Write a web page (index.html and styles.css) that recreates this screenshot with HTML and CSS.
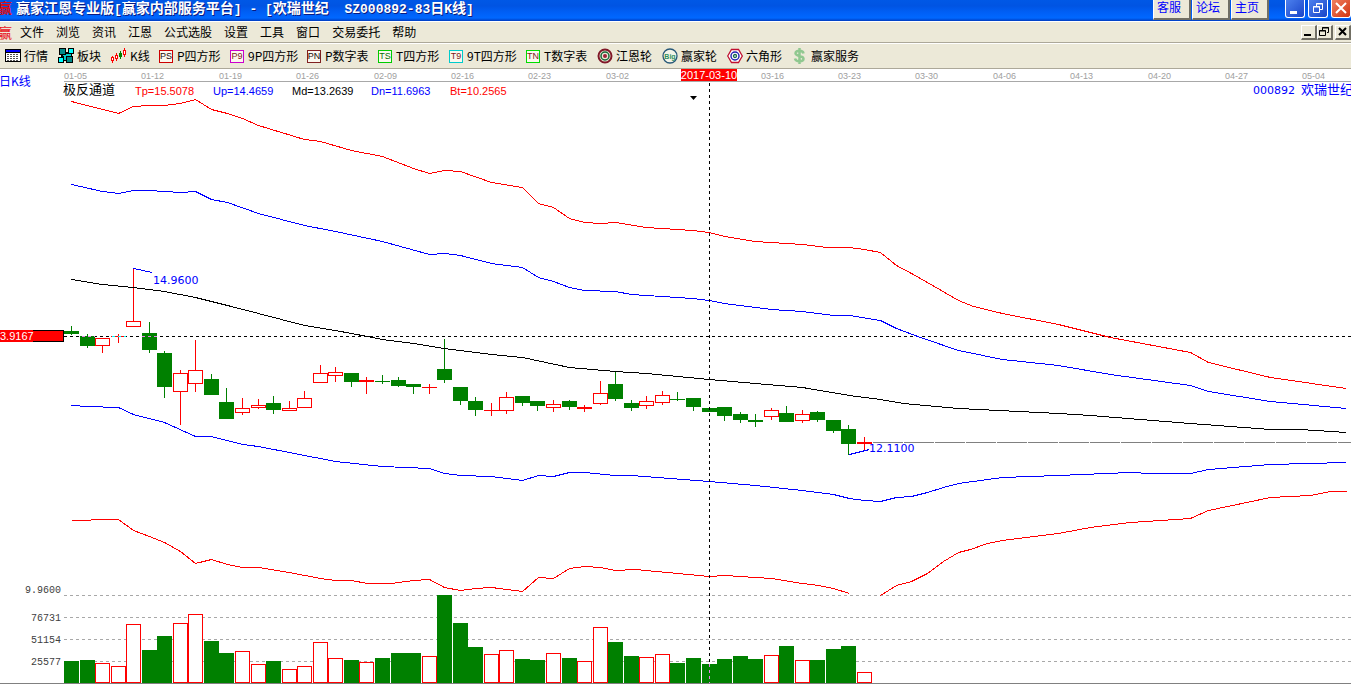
FILE: index.html
```html
<!DOCTYPE html>
<html lang="zh-CN">
<head>
<meta charset="utf-8">
<title>赢家江恩专业版</title>
<link rel="stylesheet" href="styles.css">
</head>
<body>
<div class="app">
<header class="titlebar">
  <span class="logo logo-dark">赢</span>
  <h1 class="title">赢家江恩专业版<span class="half">[</span>赢家内部服务平台<span class="half">] - [</span>欢瑞世纪<span class="half">&nbsp; SZ000892-83</span>日<span class="half">K</span>线<span class="half">]</span></h1>
  <div class="links">
    <button class="link-btn">客服</button>
    <button class="link-btn">论坛</button>
    <button class="link-btn">主页</button>
  </div>
  <div class="winctl">
    <button class="win" aria-label="最小化"><svg width="20" height="18"><path d="M5 11h7v3H5z" fill="#fff"/></svg></button>
    <button class="win" aria-label="还原"><svg width="20" height="18" fill="none" stroke="#fff"><path d="M8.500 6V3.500h6v6H12M8 4h7"/><path d="M5.500 6.500h6v6h-6zM5 7h7"/></svg></button>
    <button class="win close" aria-label="关闭"><svg width="20" height="18"><path d="M5 3l10 10M15 3L5 13" stroke="#fff" stroke-width="2"/></svg></button>
  </div>
</header>
<nav class="menubar">
  <span class="logo">赢</span>
  <button class="menu">文件</button><button class="menu">浏览</button><button class="menu">资讯</button><button class="menu">江恩</button><button class="menu">公式选股</button><button class="menu">设置</button><button class="menu">工具</button><button class="menu">窗口</button><button class="menu">交易委托</button><button class="menu">帮助</button>
  <div class="mdi">
    <button class="small" aria-label="最小化窗口"><svg width="13" height="12"><path d="M2 8h7v2H2z"/></svg></button>
    <button class="small" aria-label="还原窗口"><svg width="13" height="12" fill="none" stroke="#000"><path d="M4.500 4V1.500h6v5H9M4 2h7M1.500 4.500h6v5h-6zM1 5h7"/></svg></button>
    <button class="small last" aria-label="关闭窗口"><svg width="13" height="12"><path d="M3 2l7 7M10 2L3 9" stroke="#000" stroke-width="2"/></svg></button>
  </div>
</nav>
<div class="toolbar">
  <button class="tool w53"><svg class="ico" width="17" height="16" shape-rendering="crispEdges"><path d="M0 1h16v13H0z"/><path d="M1 2h14v2H1z" fill="#00f"/><path d="M1 5h14v8H1z" fill="#fff"/><path d="M2 6.500h12M2 8.500h12M2 10.500h12M2 12.500h12" stroke="#555" stroke-dasharray="2 1"/></svg>行情</button>
  <button class="tool w53"><svg class="ico" width="17" height="16" stroke="#000" shape-rendering="crispEdges"><path d="M4.500 4.500h9v8h-9z" fill="#0cc"/><path d="M1.500.500h6v6h-6zM8.500 8.500h6v6h-6z" fill="#088"/><path d="M10.500.500h5v5h-5zM.500 9.500h5v5h-5z" fill="#0ff"/><path d="M5.500 8v7M8 5.500h3M3 7v3M13 6v3" fill="none"/></svg>板块</button>
  <button class="tool w48"><svg class="ico" width="17" height="16" shape-rendering="crispEdges"><path d="M1.500 8v7M5.500 5v8M13.500 0v9" stroke="red"/><path d="M9.500 3v8" stroke="green"/><path d="M.500 9.500h2v3h-2zM4.500 7.500h2v3h-2zM12.500 2.500h2v4h-2z" fill="#fff" stroke="red"/><path d="M8 5h3v4H8z" fill="green"/></svg>K线</button>
  <button class="tool w71"><span class="tag ps">PS</span>P四方形</button>
  <button class="tool w77"><span class="tag p9">P9</span>9P四方形</button>
  <button class="tool w71"><span class="tag pn">PN</span>P数字表</button>
  <button class="tool w71"><span class="tag ts">TS</span>T四方形</button>
  <button class="tool w77"><span class="tag t9">T9</span>9T四方形</button>
  <button class="tool w71"><span class="tag tn">TN</span>T数字表</button>
  <button class="tool w65"><svg class="ico" width="17" height="16" fill="none"><circle cx="8" cy="8" r="6.500" stroke="#801828" stroke-width="2"/><circle cx="8" cy="8" r="4" stroke="#186838" stroke-width="1.500"/><circle cx="8" cy="8" r="2" fill="#a02038"/></svg>江恩轮</button>
  <button class="tool w65"><svg class="ico" width="17" height="16"><circle cx="8" cy="8" r="7" fill="#f4f4e8" stroke="#285878" stroke-width="1.300"/><text x="8" y="11" text-anchor="middle" class="big-ico">Big</text></svg>赢家轮</button>
  <button class="tool w65"><svg class="ico" width="17" height="16" fill="none"><path d="M4.500 1.500h7L15.300 8l-3.800 6.500h-7L.700 8z" fill="#fff" stroke="#c01030" stroke-width="1.300"/><circle cx="8" cy="8" r="4" stroke="#2020b0" stroke-width="1.400"/><circle cx="8" cy="8" r="1.500" stroke="#186848" stroke-width="1.300"/></svg>六角形</button>
  <button class="tool w71"><svg class="ico" width="17" height="16" fill="none" stroke="#90c890" stroke-width="2.500"><path d="M11.500 5.500C11 2 3.500 2 3.500 5.300S11.500 7.500 11.500 10.700 4 14.500 3 10.500M7.500 0v16"/></svg>赢家服务</button>
</div>
<main class="chart-area">
  <svg id="chart" class="chart" viewBox="0 69 1351 615" role="img" aria-label="欢瑞世纪 日K线"></svg>
</main>
</div>
<script src="chart.js"></script>
</body>
</html>
```
FILE: styles.css
```css
* { box-sizing: border-box; }
body { margin: 0; background: #fff; overflow: hidden; font-family: "Noto Sans CJK SC", sans-serif; font-size: 12px; line-height: 16px; color: #000; }
button { font: inherit; color: inherit; background: none; border: 0; padding: 0; margin: 0; white-space: nowrap; }
.app { display: flex; flex-direction: column; }
.titlebar { display: flex; align-items: flex-start; height: 21px; background: linear-gradient(#0058e6 0, #0054e3 6px, #005ff5 12px, #0068ff 18px, #003cc0 21px); }
.logo { width: 16px; flex: none; color: #e81020; font-size: 14px; font-weight: bold; line-height: 20px; text-indent: -2px; overflow: hidden; }
.menubar .logo { width: 20px; font-weight: normal; }
.logo-dark { line-height: 15px; color: #d01020; }
.title { margin: 0; color: #fff; font-size: 14px; font-weight: bold; line-height: 15px; white-space: pre; text-shadow: 1px 1px #0a1a80; }
.half { font-family: "Liberation Mono", monospace; font-size: 13px; }
.links { display: flex; gap: 1px; margin-left: auto; }
.link-btn { width: 38px; height: 20px; padding: 0 3px 5px; text-align: left; background: #ece9d8; color: #00f; border-left: 1px solid #fff; border-right: 2px solid #716f64; border-bottom: 2px solid #716f64; line-height: 13px; }
.winctl { display: flex; gap: 3px; margin-left: 16px; }
.win { width: 20px; height: 18px; background: linear-gradient(135deg, #4c80ee, #1844c8); border: 1px solid #fff; border-top: 0; border-radius: 0 0 3px 3px; overflow: hidden; }
.win svg { display: block; margin-left: -1px; }
.close { background: linear-gradient(135deg, #f08060, #d03410); }
.menubar { display: flex; align-items: center; height: 22px; background: #ece9d8; border-top: 1px solid #fff; border-bottom: 1px solid #aca899; }
.menu { margin-right: 12px; }
.mdi { display: flex; margin-left: auto; }
.small { width: 16px; height: 15px; background: #ece9d8; border: 1px solid #fff; border-right: 2px solid #716f64; border-bottom: 2px solid #716f64; }
.small svg { display: block; }
.small.last { margin-left: 2px; }
.toolbar { display: flex; align-items: center; height: 26px; padding-left: 5px; background: #ece9d8; border-top: 1px solid #fff; border-bottom: 1px solid #aca899; }
.tool { display: flex; align-items: center; flex: none; text-align: left; line-height: 14px; }
.ico { flex: none; margin-right: 2px; }
.w48 { width: 48px; } .w53 { width: 53px; } .w65 { width: 65px; } .w71 { width: 71px; } .w77 { width: 77px; }
.tag { flex: none; width: 14px; height: 13px; margin-right: 4px; border: 1px solid #c00; font-family: "Liberation Sans", sans-serif; font-size: 9px; line-height: 11px; text-align: center; color: #802020; background: #fbf8ee; display: flex; justify-content: center; }
.ps, .pn { color: #200808; } .p9 { border-color: #c0c; }
.ts { border-color: #0c0; color: #067006; } .t9 { border-color: #0cc; } .tn { border-color: #0d0; }
.pn { border-color: #802020; }
.big-ico { font: bold 7px "Liberation Sans", sans-serif; fill: #309060; }
.chart { display: block; width: 100%; height: auto; }
.red { stroke: #f00; } .green { stroke: #008000; } .blue { stroke: #00f; } .black { stroke: #000; } .gray { stroke: #a8a8a8; } .dim { stroke: #808080; } .violet { stroke: #ee82ee; } .cyan { stroke: #0ff; }
.line { fill: none; stroke-width: 1; shape-rendering: crispEdges; }
.dash { stroke-dasharray: 3 3; }
.long { stroke-dasharray: 30 1; }
.hollow { fill: #fff; stroke: #f00; shape-rendering: crispEdges; }
.fill-green { fill: #008000; shape-rendering: crispEdges; }
.fill-red { fill: #f00; shape-rendering: crispEdges; }
.t { font-family: "Liberation Sans", sans-serif; font-size: 11px; }
.t-date { font-size: 9px; fill: #a0a0a0; }
.t-red { fill: #f00; } .t-blue { fill: #00f; } .t-white { fill: #fff; }
.t-cursor { font-size: 11px; fill: #fff; text-anchor: middle; }
.t-price { font-family: "DejaVu Sans", sans-serif; fill: #00f; }
.t-axis { font-family: "Liberation Mono", monospace; font-size: 10px; fill: #404040; text-anchor: end; }
.t-cn { font-family: "Noto Sans CJK SC", sans-serif; font-size: 13px; }
.t-period { font-size: 12px; }
```
FILE: chart.js
```js
const svg = document.getElementById('chart');
function el(name, attrs, text) {
  const e = document.createElementNS('http://www.w3.org/2000/svg', name);
  for (const k in attrs) e.setAttribute(k, attrs[k]);
  if (text) e.textContent = text;
  svg.appendChild(e);
}
const line = (c, d) => el('path', { class: 'line ' + c, d });
const text = (c, x, y, s) => el('text', { class: 't ' + c, x, y }, s);
const curve = (c, pts) => line(c, 'M' + pts.map(([x, y]) => (x + 0.5) + ' ' + (y + 0.5)).join('L'));

// Volume grid
[595, 617, 639, 661].forEach(y => line('gray dash', `M64 ${y + 0.5}H1351`));
line('dim long', 'M873 442.5H1351');

// [kind, high, body top, body bottom, low, volume top]
const bars = [
  ['g',326,331,334,335,661],['g',334,336,346,348,660],['r',338,338,346,353,663],['f',334,336,337,343,666],
  ['r',268,321,327,327,624],['g',322,333,350,353,650],['g',351,353,387,398,636],['r',370,373,392,425,623],
  ['r',340,370,384,392,614],['g',374,379,395,395,641],['g',388,402,419,419,653],['r',398,408,413,415,651],
  ['r',399,405,408,409,664],['g',396,403,410,414,661],['r',401,408,411,411,669],['r',391,398,408,408,666],
  ['r',365,373,383,383,642],['r',367,372,376,382,658],['g',373,373,382,387,660],['f',377,380,382,394,662],
  ['g',375,381,382,384,658],['g',377,380,386,387,653],['g',384,384,387,394,653],['f',384,387,388,394,656],
  ['g',339,369,380,383,595],['g',387,387,401,405,623],['g',397,401,410,416,647],['f',403,410,411,416,654],
  ['r',392,397,411,414,650],['g',396,396,403,406,659],['g',401,401,406,411,660],['r',400,404,408,412,653],
  ['g',400,401,407,410,658],['f',405,407,409,412,661],['r',381,393,404,405,627],['g',371,384,399,401,642],
  ['g',400,403,408,411,656],['r',396,401,406,409,657],['r',391,395,403,405,654],['g',392,399,400,401,663],
  ['g',398,398,407,411,658],['g',408,408,412,412,664],['g',407,407,416,421,659],['g',412,414,420,423,656],
  ['g',414,420,422,427,659],['r',408,410,417,420,655],['g',406,413,422,422,646],['r',410,414,421,423,660],
  ['g',411,412,420,422,660],['g',420,420,431,433,649],['g',425,429,444,455,646],['f',437,442,444,450,672]
];
bars.forEach(([k, hi, top, bot, lo, vol], i) => {
  const x = Math.round(71 + i * 793 / 51), l = x - 7;
  line(k === 'g' ? 'green' : 'red', `M${x + 0.5} ${hi}V${lo}`);
  if (k === 'r') el('rect', { class: 'hollow', x: l + 0.5, y: top + 0.5, width: 14, height: bot - top - 1 });
  else el('rect', { class: k === 'g' ? 'fill-green' : 'fill-red', x: l, y: top, width: 15, height: bot - top });
  if (k === 'g') el('rect', { class: 'fill-green', x: l, y: vol, width: 15, height: 683 - vol });
  else el('rect', { class: 'hollow', x: l + 0.5, y: vol + 0.5, width: 14, height: 682 - vol });
});
line('black dash', 'M64 336.5H1351');
line('violet dash', 'M82 336.5H95M142 336.5H157');
line('cyan dash', 'M112 336.5H126');

// Channel curves
curve('red', [[71,101],[118,113],[133,106],[149,105],[164,105],[180,103],[195,99],[211,109],[227,113],[242,118],[258,125],[304,139],[320,141],[351,150],[382,156],[413,168],[429,173],[444,170],[460,171],[491,182],[522,187],[538,203],[553,207],[569,218],[584,222],[600,223],[615,222],[646,227],[692,230],[709,232],[724,236],[755,241],[802,244],[827,247],[849,247],[864,249],[880,252],[896,265],[911,273],[927,282],[958,300],[973,306],[1002,313],[1058,324],[1110,337],[1190,352],[1208,362],[1270,377],[1346,388]]);
curve('blue', [[71,184],[102,191],[118,193],[133,190],[149,190],[180,192],[195,191],[211,199],[227,202],[258,213],[304,225],[335,231],[382,241],[429,254],[444,253],[460,255],[491,263],[522,267],[538,277],[553,281],[569,287],[584,290],[615,291],[631,294],[692,298],[709,300],[724,303],[771,309],[802,311],[833,315],[849,315],[880,320],[896,328],[920,337],[958,350],[1002,359],[1058,365],[1110,374],[1190,385],[1208,391],[1270,401],[1346,408]]);
curve('black', [[71,279],[102,284],[133,287],[164,291],[195,297],[227,305],[258,313],[304,325],[335,330],[367,336],[382,339],[413,343],[444,348],[491,354],[522,357],[569,367],[615,371],[646,373],[709,379],[755,383],[802,387],[849,395],[880,399],[903,403],[958,408],[1058,413],[1090,415],[1190,423],[1270,429],[1300,429],[1346,432]]);
curve('blue', [[71,405],[87,406],[118,407],[133,414],[164,422],[195,436],[211,436],[242,444],[258,446],[335,461],[382,466],[429,468],[444,473],[460,475],[491,476],[522,480],[538,475],[553,476],[569,472],[584,472],[615,475],[631,475],[709,481],[755,485],[802,490],[833,494],[849,498],[864,500],[880,501],[896,497],[911,496],[927,492],[943,487],[958,483],[1002,477],[1058,475],[1130,472],[1150,473],[1190,473],[1208,469],[1270,464],[1346,462]]);
curve('red', [[71,520],[87,520],[95,519],[118,519],[133,530],[149,536],[164,542],[180,551],[195,563],[211,559],[227,564],[242,567],[258,567],[289,572],[320,578],[335,580],[351,580],[367,583],[391,583],[413,580],[429,579],[444,587],[460,590],[475,588],[491,587],[522,591],[538,577],[553,578],[569,568],[584,566],[600,567],[615,570],[635,569],[709,576],[724,575],[771,578],[802,583],[818,585],[833,588],[849,593]]);
curve('red', [[880,595],[896,585],[911,581],[927,573],[943,561],[958,552],[970,549],[987,543],[1002,540],[1058,533],[1090,527],[1130,522],[1190,518],[1208,510],[1270,497],[1310,495],[1330,491],[1346,491]]);

// High and low markers
curve('blue', [[133,268],[152,272]]);
text('t-price', 153, 284, '14.9600');
curve('blue', [[849,454],[869,449]]);
text('t-price', 869, 452, '12.1100');

// Crosshair, date axis and frame
line('black dash', 'M709.5 83V664');
line('violet dash', 'M709.5 664V683');
line('gray', 'M64 81.5H1351');
line('dim', 'M0 683.5H1351');
['01-05','01-12','01-19','01-26','02-09','02-16','02-23','03-02','','03-16','03-23','03-30','04-06','04-13','04-20','04-27','05-04']
  .forEach((d, i) => d && text('t-date', Math.round(64 + i * 77.4), 79, d));
el('rect', { class: 'fill-red', x: 681, y: 69, width: 56, height: 12 });
text('t-cursor', 709, 79, '2017-03-10');
el('path', { d: 'M690 96h7l-3.5 4z' });

text('t-cn t-blue t-period', -1, 86, '日K线');
text('t-cn', 63, 94, '极反通道');
text('t-red', 135, 95, 'Tp=15.5078');
text('t-blue', 213, 95, 'Up=14.4659');
text('', 292, 95, 'Md=13.2639');
text('t-blue', 371, 95, 'Dn=11.6963');
text('t-red', 450, 95, 'Bt=10.2565');
text('t-price', 1253, 94, '000892');
text('t-cn t-blue', 1301, 94, '欢瑞世纪');

el('rect', { class: 'fill-red', x: 0, y: 330, width: 64, height: 12 });
line('black', 'M33 330.5H63.5V341.5H33');
text('t-white', 0, 340, '3.9167');
[[593,'9.9600'],[621,'76731'],[643,'51154'],[665,'25577']].forEach(([y, s]) => text('t-axis', 61, y, s));
```
